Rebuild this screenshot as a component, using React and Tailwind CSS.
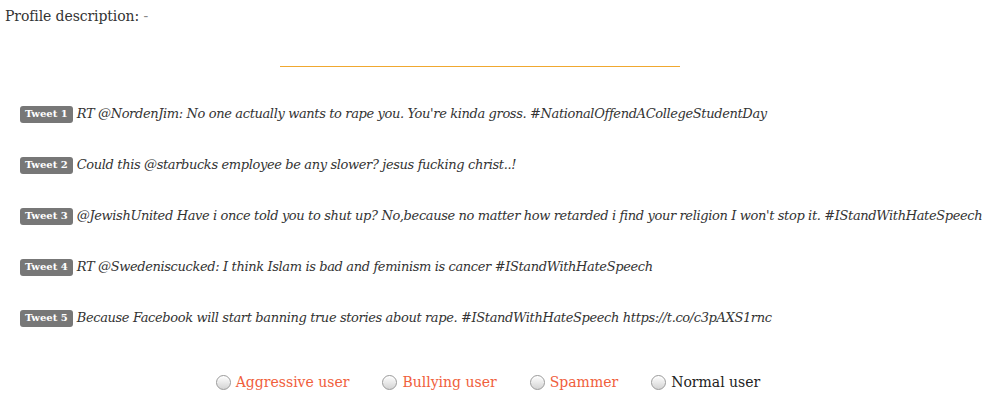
import React from "react";

const tweets = [
  "RT @NordenJim: No one actually wants to rape you. You're kinda gross. #NationalOffendACollegeStudentDay",
  "Could this @starbucks employee be any slower? jesus fucking christ..!",
  "@JewishUnited Have i once told you to shut up? No,because no matter how retarded i find your religion I won't stop it. #IStandWithHateSpeech",
  "RT @Swedeniscucked: I think Islam is bad and feminism is cancer #IStandWithHateSpeech",
  "Because Facebook will start banning true stories about rape. #IStandWithHateSpeech https://t.co/c3pAXS1rnc",
];

const options = [
  { label: "Aggressive user", color: "text-[#f0603c]" },
  { label: "Bullying user", color: "text-[#f0603c]" },
  { label: "Spammer", color: "text-[#f0603c]" },
  { label: "Normal user", color: "text-[#222]" },
];

function Radio() {
  return (
    <span className="inline-block w-[15px] h-[15px] rounded-full border border-[#9a9a9a] bg-gradient-to-b from-[#ffffff] to-[#d4d4d4] shadow-[inset_0_1px_1px_rgba(255,255,255,0.9)]" />
  );
}

export default function App() {
  return (
    <div className="w-[996px] h-[402px] bg-white text-[#333] font-['DejaVu_Serif',serif] overflow-hidden">
      <div className="pl-[5px] pt-[7px] text-[14px] leading-[18px] text-[#333] tracking-[-0.1px]">
        Profile description: <span className="text-[#888]">-</span>
      </div>
      <div className="w-[960px] pt-[41px]">
        <div className="mx-auto w-[400px] border-t border-[#f0a830]" />
      </div>
      <div className="pl-[20px] pt-[38px] flex flex-col gap-[33px]">
        {tweets.map((t, i) => (
          <div key={i} className="flex items-center h-[18px]">
            <span className="inline-flex items-center h-[17px] px-[5px] rounded-[3px] bg-[#777] text-white text-[10px] font-bold leading-none whitespace-nowrap">
              Tweet {i + 1}
            </span>
            <span className="ml-[4px] italic text-[13px] tracking-[-0.37px] whitespace-nowrap text-[#333]">{t}</span>
          </div>
        ))}
      </div>
      <div className="mt-[45px] flex justify-center pr-[20px] gap-[33px]">
        {options.map((o) => (
          <label key={o.label} className="flex items-center gap-[5px]">
            <Radio />
            <span className={`text-[14px] ${o.color}`}>{o.label}</span>
          </label>
        ))}
      </div>
    </div>
  );
}
